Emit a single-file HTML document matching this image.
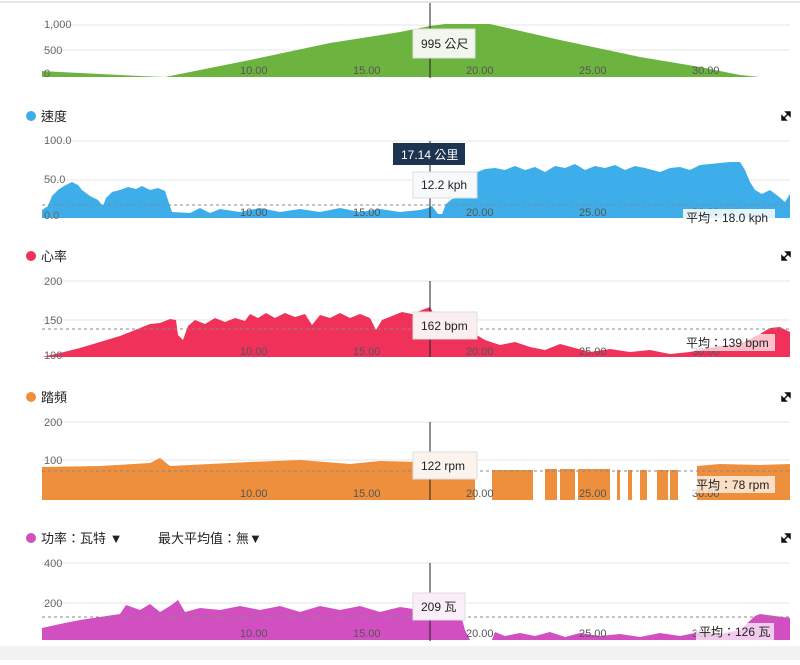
<!DOCTYPE html>
<html><head><meta charset="utf-8"><style>
body{margin:0;width:800px;height:660px;overflow:hidden;background:#fff;font-family:"Liberation Sans","Noto Sans CJK TC",sans-serif;}
svg text{font-family:"Liberation Sans","Noto Sans CJK TC",sans-serif;}
</style></head><body>
<svg width="800" height="660" xmlns="http://www.w3.org/2000/svg">
<line x1="0" y1="2" x2="800" y2="2" stroke="#e6e6e6" stroke-width="2"/>
<rect x="0" y="646" width="800" height="14" fill="#f2f2f2"/>
<g font-size="11" fill="#666">
<!-- elevation -->
<line x1="42" y1="25" x2="790" y2="25" stroke="#e6e6e6"/>
<line x1="42" y1="50" x2="790" y2="50" stroke="#e6e6e6"/>
<polygon fill="#6db33f" points="42,77 42,71 60,72 100,74 140,76 165,77 175,75 250,60 330,43 400,32 430,26 445,24 490,24 560,40 640,57 700,67 740,75 760,77 790,77"/>
<text x="44" y="28">1,000</text><text x="44" y="54">500</text><text x="44" y="77">0</text>
<g fill="#555"><text x="240" y="74">10.00</text><text x="353" y="74">15.00</text><text x="466" y="74">20.00</text><text x="579" y="74">25.00</text><text x="692" y="74">30.00</text></g>
<!-- speed -->
<line x1="42" y1="141" x2="790" y2="141" stroke="#e6e6e6"/>
<line x1="42" y1="180" x2="790" y2="180" stroke="#e6e6e6"/>
<polygon fill="#3daee9" points="42,218 42,210 48,206 52,196 58,190 64,186 72,182 78,185 82,190 90,196 98,200 103,206 106,198 112,192 120,190 128,187 136,189 142,186 150,190 158,188 165,191 170,206 172,212 190,213 200,208 210,213 220,209 240,212 260,208 280,212 300,209 320,212 340,208 360,212 380,209 400,212 420,210 428,208 432,206 438,214 442,214 446,204 452,199 458,198 462,190 468,181 475,173 485,169 495,168 505,170 515,166 525,170 535,167 545,172 555,166 565,168 575,164 585,170 595,166 605,168 615,165 625,170 635,166 645,168 660,172 670,168 680,167 690,170 700,165 710,164 720,163 730,162 740,162 745,170 750,182 755,190 762,194 770,190 778,196 785,202 790,194 790,218"/>
<line x1="42" y1="205" x2="790" y2="205" stroke="#888" stroke-dasharray="3,3"/>
<text x="44" y="144">100.0</text><text x="44" y="183">50.0</text><text x="44" y="219">0.0</text>
<g fill="#555"><text x="240" y="216">10.00</text><text x="353" y="216">15.00</text><text x="466" y="216">20.00</text><text x="579" y="216">25.00</text><text x="692" y="216">30.00</text></g>
<!-- HR -->
<line x1="42" y1="281" x2="790" y2="281" stroke="#e6e6e6"/>
<line x1="42" y1="320" x2="790" y2="320" stroke="#e6e6e6"/>
<polygon fill="#f0325a" points="42,357 60,353 80,348 100,342 120,336 140,328 150,324 160,323 170,319 176,320 178,335 183,340 188,326 195,320 205,324 215,318 225,322 235,318 245,321 250,314 258,318 266,313 275,318 285,313 295,317 305,314 312,325 320,315 330,318 340,313 350,318 360,314 370,318 376,330 382,320 392,316 402,312 412,314 422,310 430,307 436,318 445,330 460,332 475,334 485,340 500,345 515,342 530,347 545,350 560,344 575,348 590,352 610,349 630,352 650,350 670,354 690,352 705,349 720,346 740,344 760,334 770,328 780,327 790,332 790,357"/>
<line x1="42" y1="329" x2="790" y2="329" stroke="#888" stroke-dasharray="3,3"/>
<text x="44" y="285">200</text><text x="44" y="324">150</text><text x="44" y="359">100</text>
<g fill="#555"><text x="240" y="355">10.00</text><text x="353" y="355">15.00</text><text x="466" y="355">20.00</text><text x="579" y="355">25.00</text><text x="692" y="355">30.00</text></g>
<!-- cadence -->
<line x1="42" y1="422" x2="790" y2="422" stroke="#e6e6e6"/>
<line x1="42" y1="460" x2="790" y2="460" stroke="#e6e6e6"/>
<g fill="#ee8f3e">
<polygon points="42,500 42,467 100,466 150,463 160,458 170,466 250,462 300,460 350,464 380,461 420,462 440,463 460,466 475,466 475,500"/>
<rect x="492" y="470" width="41" height="30"/>
<rect x="545" y="469" width="12" height="31"/>
<rect x="560" y="469" width="15" height="31"/>
<rect x="578" y="469" width="32" height="31"/>
<rect x="617" y="470" width="3" height="30"/>
<rect x="628" y="470" width="4" height="30"/>
<rect x="640" y="470" width="7" height="30"/>
<rect x="657" y="470" width="11" height="30"/>
<rect x="670" y="470" width="8" height="30"/>
<polygon points="697,500 697,466 720,464 760,465 790,464 790,500"/>
</g>
<line x1="42" y1="471" x2="790" y2="471" stroke="#888" stroke-dasharray="3,3"/>
<text x="44" y="426">200</text><text x="44" y="464">100</text>
<g fill="#555"><text x="240" y="497">10.00</text><text x="353" y="497">15.00</text><text x="466" y="497">20.00</text><text x="579" y="497">25.00</text><text x="692" y="497">30.00</text></g>
<!-- power -->
<line x1="42" y1="563" x2="790" y2="563" stroke="#e6e6e6"/>
<line x1="42" y1="603" x2="790" y2="603" stroke="#e6e6e6"/>
<polygon fill="#d24fc1" points="42,640 42,628 60,624 80,620 100,617 120,614 126,605 140,610 150,604 160,612 170,606 178,600 185,612 200,608 220,610 240,606 260,610 280,606 300,612 320,606 340,610 360,606 380,612 400,607 420,610 440,612 460,612 465,630 470,640 492,640 495,632 505,636 520,633 535,636 550,632 565,637 580,633 600,636 620,634 640,637 660,633 680,636 700,632 720,634 740,630 755,616 760,614 775,616 790,618 790,640"/>
<line x1="42" y1="617" x2="790" y2="617" stroke="#888" stroke-dasharray="3,3"/>
<text x="44" y="567">400</text><text x="44" y="607">200</text>
<g fill="#555"><text x="240" y="637">10.00</text><text x="353" y="637">15.00</text><text x="466" y="637">20.00</text><text x="579" y="637">25.00</text><text x="692" y="637">30.00</text></g>
</g>
<!-- cursor -->
<line x1="430" y1="3" x2="430" y2="78" stroke="#222"/>
<line x1="430" y1="141" x2="430" y2="218" stroke="#222"/>
<line x1="430" y1="281" x2="430" y2="357" stroke="#222"/>
<line x1="430" y1="422" x2="430" y2="500" stroke="#222"/>
<line x1="430" y1="563" x2="430" y2="641" stroke="#222"/>
<!-- titles -->
<g font-size="13" fill="#222">
<circle cx="31" cy="116" r="5" fill="#3daee9"/><text x="41" y="121">速度</text>
<circle cx="31" cy="256" r="5" fill="#f0325a"/><text x="41" y="261">心率</text>
<circle cx="31" cy="397" r="5" fill="#ee8f3e"/><text x="41" y="402">踏頻</text>
<circle cx="31" cy="538" r="5" fill="#d24fc1"/><text x="41" y="543">功率：瓦特 ▼</text><text x="158" y="543">最大平均值：無▼</text>
</g>
<g stroke="#111" stroke-width="1.5" fill="#111">
<g transform="translate(786,116)"><path d="M-4,4 L4,-4"/><path d="M4,-4 L0,-4 L4,0Z"/><path d="M-4,4 L0,4 L-4,0Z"/></g>
<g transform="translate(786,256)"><path d="M-4,4 L4,-4"/><path d="M4,-4 L0,-4 L4,0Z"/><path d="M-4,4 L0,4 L-4,0Z"/></g>
<g transform="translate(786,397)"><path d="M-4,4 L4,-4"/><path d="M4,-4 L0,-4 L4,0Z"/><path d="M-4,4 L0,4 L-4,0Z"/></g>
<g transform="translate(786,538)"><path d="M-4,4 L4,-4"/><path d="M4,-4 L0,-4 L4,0Z"/><path d="M-4,4 L0,4 L-4,0Z"/></g>
</g>
<!-- tooltips -->
<g font-size="12" fill="#222">
<rect x="413" y="29" width="62" height="29" fill="#f2f7ee" stroke="#ddd"/><text x="421" y="48">995 公尺</text>
<rect x="393" y="143" width="72" height="22" fill="#1c3450"/><text x="401" y="159" fill="#fff">17.14 公里</text>
<rect x="413" y="172" width="64" height="26" fill="#f7f9fb" stroke="#ddd"/><text x="421" y="189">12.2 kph</text>
<rect x="413" y="312" width="64" height="27" fill="#fbeef0" stroke="#ddd"/><text x="421" y="330">162 bpm</text>
<rect x="413" y="452" width="64" height="27" fill="#fbf4ee" stroke="#ddd"/><text x="421" y="470">122 rpm</text>
<rect x="413" y="593" width="52" height="27" fill="#faeef8" stroke="#ddd"/><text x="421" y="611">209 瓦</text>
<rect x="683" y="209" width="92" height="17" fill="#fff" opacity="0.85"/><text x="686" y="222">平均：18.0 kph</text>
<rect x="683" y="334" width="92" height="17" fill="#fff" opacity="0.7"/><text x="686" y="347">平均：139 bpm</text>
<rect x="693" y="476" width="82" height="17" fill="#fff" opacity="0.7"/><text x="696" y="489">平均：78 rpm</text>
<rect x="696" y="623" width="78" height="17" fill="#fff" opacity="0.7"/><text x="699" y="636">平均：126 瓦</text>
</g>
</svg>
</body></html>
